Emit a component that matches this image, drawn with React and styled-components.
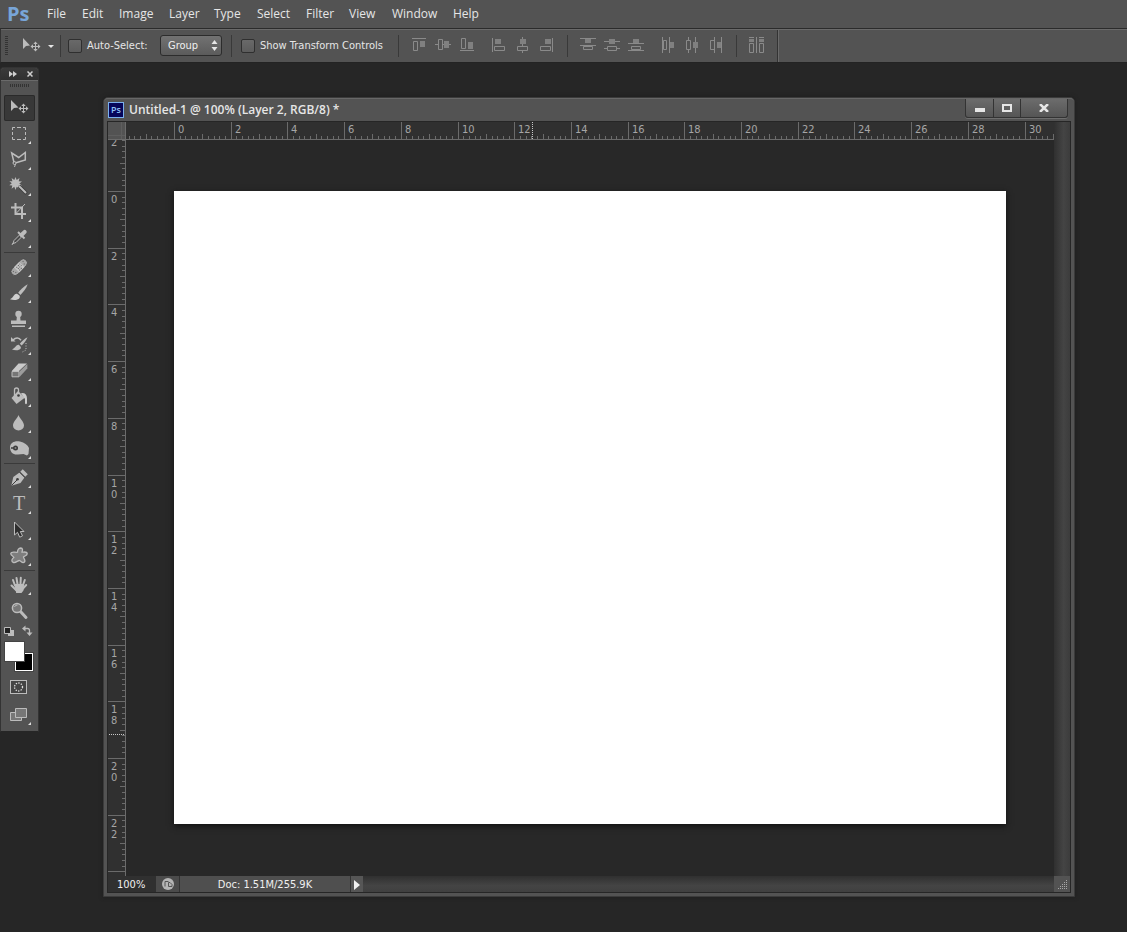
import React from "react";
import styled, { createGlobalStyle } from "styled-components";

const MENUS = ["File", "Edit", "Image", "Layer", "Type", "Select", "Filter", "View", "Window", "Help"];
const UI = `"Open Sans", "Noto Sans", sans-serif`;
const SMALL = `"DejaVu Sans Condensed", "DejaVu Sans", sans-serif`;

const Global = createGlobalStyle`
  * { box-sizing: border-box; }
  body { margin: 0; background: #262626; }
  button { font: inherit; color: inherit; border: 0; padding: 0; background: none; display: block; }
  svg { display: block; }
`;

const Page = styled.div`
  min-height: 100vh;
  display: flex;
  flex-direction: column;
  background: #262626;
  color: #e6e6e6;
  font: 11px/14px ${SMALL};
`;

/* ---------- menu bar ---------- */
const MenuBar = styled.header`
  display: flex;
  align-items: center;
  height: 28px;
  background: #535353;
  font: 12px/16px ${UI};
`;
const Logo = styled.span`
  width: 47px;
  padding-left: 7px;
  color: #78a5d8;
  font: bold 20px/26px ${UI};
`;
const MenuList = styled.nav`
  display: grid;
  grid-template-columns: 35px 37px 50px 45px 43px 49px 43px 43px 61px 40px;
`;
const MenuItem = styled.button`
  text-align: left;
  white-space: nowrap;
`;

/* ---------- options bar ---------- */
const OptionsBar = styled.div`
  display: flex;
  align-items: center;
  height: 35px;
  background: #535353;
  border-top: 1px solid #2b2b2b;
  border-bottom: 1px solid #232323;
  border-left: 1px solid #333;
  box-shadow: inset 0 1px 0 #6a6a6a;
`;
const Section = styled.div`
  display: flex;
  align-items: center;
  width: ${(p) => p.$w}px;
  padding: 0 ${(p) => p.$right ?? 9}px 0 ${(p) => p.$left}px;
  gap: 5px;
  white-space: nowrap;
  & > * { flex: none; }
`;
const Icons = styled.div`
  display: flex;
  align-items: center;
  gap: 8px;
  padding: 0 8px;
`;
const IconGroup = styled.div`
  display: flex;
`;
const AlignButton = styled.button`
  width: 24px;
  height: 24px;
  padding: 3px 4px 5px;
`;
const Separator = styled.span`
  width: 1px;
  height: 22px;
  background: #393939;
`;
const BarEnd = styled.span`
  width: 2px;
  align-self: stretch;
  margin-top: 1px;
  background: #333;
  border-right: 1px solid #6a6a6a;
`;
const Grip = styled.span`
  width: 3px;
  height: 20px;
  background: repeating-linear-gradient(#333 0 1px, #535353 1px 2px);
`;
const Check = styled.input`
  appearance: none;
  flex: none;
  width: 14px;
  height: 14px;
  margin: 0;
  border: 1px solid #2f2f2f;
  border-radius: 2px;
  background: linear-gradient(#696969, #5c5c5c);
`;
const SelectBox = styled.div`
  position: relative;
  width: 62px;
  margin-left: auto;
  svg { position: absolute; right: 4px; top: 5px; pointer-events: none; }
`;
const Select = styled.select`
  appearance: none;
  display: block;
  width: 100%;
  height: 21px;
  padding: 0 7px;
  border: 1px solid #2c2c2c;
  border-radius: 3px;
  background: linear-gradient(#727272, #5b5b5b);
  color: #f0f0f0;
  font: inherit;
`;

/* ---------- workspace ---------- */
const Workspace = styled.main`
  flex: 1;
  display: flex;
  align-items: flex-start;
  padding: 4px 52px 36px 0;
`;

const ToolPanel = styled.aside`
  flex: none;
  display: flex;
  flex-direction: column;
  width: 39px;
  padding-bottom: 3px;
  background: #535353;
  border: 1px solid #333;
  border-bottom-color: #262626;
  border-radius: 4px 4px 0 0;
`;
const PanelHead = styled.div`
  display: flex;
  justify-content: space-between;
  align-items: center;
  height: 12px;
  padding: 0 5px 0 8px;
  background: linear-gradient(#3a3a3a, #303030);
  border-radius: 3px 3px 0 0;
`;
const PanelGrip = styled.div`
  width: 20px;
  height: 3px;
  margin: 3px 6px 8px;
  background: repeating-linear-gradient(90deg, #333 0 1px, #535353 1px 2px);
`;
const ToolBody = styled.div`
  display: flex;
  flex-direction: column;
  padding: 0 3px;
  border-top: 1px solid #6a6a6a;
`;
const Tool = styled.button`
  width: 31px;
  height: 26px;
  border-radius: 2px;
  ${(p) => p.$active && "background: #383838; box-shadow: inset 0 0 0 1px #2a2a2a;"}
`;
const ToolLine = styled.hr`
  width: 31px;
  height: 1px;
  margin: 1px 0;
  border: 0;
  background: #3a3a3a;
`;
const SwapRow = styled.div`
  display: flex;
  justify-content: space-between;
  width: 29px;
  height: 13px;
`;
const Swatches = styled.div`
  position: relative;
  width: 28px;
  height: 32px;
  margin: 5px 0 0 1px;
`;
const Swatch = styled.button`
  position: absolute;
  width: ${(p) => (p.$front ? 19 : 18)}px;
  height: ${(p) => (p.$front ? 19 : 18)}px;
  outline: 1px solid #444;
  ${(p) => (p.$front
    ? "left: 0; top: 0; background: #fff;"
    : "right: 0; bottom: 3px; background: #000; border: 1px solid #fff;")}
`;
const ModeTools = styled.div`
  display: flex;
  flex-direction: column;
  gap: 2px;
`;

/* ---------- document window ---------- */
const DocWindow = styled.section`
  flex: 1;
  min-width: 0;
  display: flex;
  flex-direction: column;
  margin: 30px 0 0 64px;
  background: #535353;
  border: 1px solid #3b3b3b;
  border-radius: 5px 5px 0 0;
  padding: 0 3px 3px;
  box-shadow: 0 0 4px #1d1d1d;
`;
const TitleBar = styled.div`
  display: flex;
  align-items: center;
  gap: 5px;
  height: 23px;
  margin: 0 -3px;
  padding: 0 6px 0 4px;
  border-top: 1px solid #686868;
  border-radius: 4px 4px 0 0;
`;
const Badge = styled.span`
  width: 16px;
  height: 16px;
  border: 1px solid #7ab0ee;
  background: #06065a;
  color: #8fc1f5;
  text-align: center;
  font: 600 9px/13px ${UI};
`;
const Title = styled.h1`
  flex: 1;
  margin: 0;
  font: 600 12px/20px ${UI};
  white-space: nowrap;
`;
const WindowButtons = styled.div`
  display: flex;
  align-self: flex-start;
  height: 19px;
  border: 1px solid #333;
  border-top: 0;
  border-radius: 0 0 3px 3px;
  background: linear-gradient(#6c6c6c, #555);
  box-shadow: 0 1px 0 #6e6e6e;
`;
const WindowButton = styled.button`
  width: ${(p) => p.$w}px;
  display: grid;
  place-items: center;
  & + & { border-left: 1px solid #333; }
`;
const DocBody = styled.div`
  display: grid;
  grid-template-columns: 18px minmax(0, 1fr) 16px;
  grid-template-rows: 18px auto 16px;
  border: 1px solid #262626;
`;
const Corner = styled.div`
  background: #535353;
  border-right: 1px solid #6b6b6b;
  border-bottom: 1px solid #6b6b6b;
  background-image: linear-gradient(#5e5e5e, #5e5e5e), linear-gradient(#5e5e5e, #5e5e5e);
  background-size: 1px 100%, 100% 1px;
  background-position: 13px 0, 0 13px;
  background-repeat: no-repeat;
`;
const TopRuler = styled.div`
  height: 18px;
  overflow: hidden;
  background: #303030;
  border-bottom: 1px solid #6b6b6b;
`;
const SideRuler = styled.div`
  overflow: hidden;
  contain: size;
  background: #303030;
  border-right: 1px solid #6b6b6b;
`;
const VScroll = styled.div`
  grid-row: span 2;
  background: linear-gradient(90deg, #303030, #444 60%, #3c3c3c);
`;
const Viewport = styled.div`
  padding: 51px 48px 52px;
  background: #282828;
`;
const Canvas = styled.div`
  height: 633px;
  background: #fff;
  box-shadow: 0 2px 6px #111;
`;
const StatusBar = styled.footer`
  grid-column: span 2;
  display: flex;
  height: 16px;
  background: linear-gradient(#303030, #444 60%, #404040);
  line-height: 17px;
`;
const ZoomLevel = styled.input`
  width: 48px;
  height: 16px;
  padding: 1px 0 0 9px;
  border: 0;
  background: #303030;
  color: #f0f0f0;
  font: inherit;
`;
const StatusIcon = styled.button`
  width: 24px;
  padding-left: 6px;
  background: #4b4b4b;
  border-right: 1px solid #333;
`;
const DocInfo = styled.span`
  width: 171px;
  background: #4f4f4f;
  border-right: 1px solid #333;
  text-align: center;
  color: #f0f0f0;
`;
const StatusArrow = styled.button`
  width: 12px;
  background: #565656;
`;
const Resize = styled.div`
  background: #535353;
`;

/* ---------- rulers ---------- */
const UNIT = 28.35;
const MAX_UNITS = 120;
const place = (zero, units) => Math.round(zero + units * UNIT);
const tickPath = (zero, size, vertical) => {
  let d = "";
  for (let i = -9; i <= MAX_UNITS * 5; i++) {
    const at = place(zero, i / 5) + 0.5;
    const len = i % 10 === 0 ? size : i % 5 === 0 ? 5 : 3;
    d += vertical ? `M${size - len} ${at}h${len}` : `M${at} ${size - len}v${len}`;
  }
  return d;
};
const evens = (from, to) => Array.from({ length: (to - from) / 2 + 1 }, (_, i) => from + i * 2);

const HorizontalRuler = () => (
  <svg width="100%" height="17" fill="#a6a6a6" fontSize="11">
    <path d={tickPath(48, 17, false)} stroke="#6b6b6b" fill="none" />
    {evens(0, 30).map((n) => (
      <text key={n} x={place(48, n) + 4} y="11">{n}</text>
    ))}
    <path d="M406.500 0V17" stroke="#c8c8c8" strokeDasharray="1 1" />
  </svg>
);
const VerticalRuler = () => (
  <svg width="17" height="100%" fill="#a6a6a6" fontSize="11">
    <path d={tickPath(51, 17, true)} stroke="#6b6b6b" fill="none" />
    {evens(-2, 22).map((n) =>
      String(Math.abs(n)).split("").map((c, i) => (
        <text key={n + "-" + i} x="3" y={place(51, n) + 12 + i * 11}>{c}</text>
      ))
    )}
    <path d="M1 594.500H17" stroke="#c8c8c8" strokeDasharray="1 1" />
  </svg>
);

/* ---------- icons ---------- */
const INK = "#bcbcbc";
const DARK = "#3c3c3c";

const Cross = ({ x, y }) => (
  <g transform={`translate(${x} ${y})`} stroke={INK} fill={INK}>
    <path d="M0-3.500V3.500M-3.500 0H3.500" />
    <path stroke="none" d="M0-5l2.200 2.500h-4.400zM0 5l2.200-2.500h-4.400zM-5 0l2.500 2.200v-4.400zM5 0l-2.500 2.200v-4.400z" />
  </g>
);

const TOOLS = {
  move: <><path fill={INK} d="M7 5v11l3-3 4.500-.5z" /><Cross x={19.5} y={13.5} /></>,
  marquee: <path d="M8.500 9V6.500H11M13 6.500h4M19 6.500h2.500V9M21.500 11v3M21.500 16v2.500H19M17 18.500h-4M11 18.500H8.500V16M8.500 14v-3" fill="none" stroke={INK} />,
  lasso: <g fill="none" stroke={INK} strokeWidth="1.500"><path d="M10 15.500L7.700 6l7 4.500L21.300 5.500V13L12 15.800" /><circle cx="10.500" cy="16" r="1.500" strokeWidth="1" /><path d="M11.500 17l-1 3" strokeWidth="1" /></g>,
  wand: <><path fill={INK} d="M11.500 4l1.200 3 2.800-2-.8 3.200 3.300.2-2.700 2 2.700 2-3.400.1.900 3.300-2.800-2-1.200 3.200-1.200-3.200-2.700 2 .7-3.200-3-.3 2.500-2-2.500-2 3.100-.1-.8-3.200 2.700 2z" /><path d="M15 13l7.500 7.500" stroke={DARK} strokeWidth="3.500" /><path d="M15 13l7 7" stroke={INK} strokeWidth="2" /></>,
  crop: <><path d="M11.500 4v11H22M7 8.500h11V20" fill="none" stroke={INK} strokeWidth="2" /><path d="M12 14.500L21 5" stroke={INK} strokeWidth="1" /></>,
  eyedropper: <><path d="M9 18.500l1-3 6-6 2 2-6 6z" fill="#4a4a4a" stroke={INK} /><path d="M14 7l6.500 6.500" stroke={INK} strokeWidth="2" /><path d="M17.500 10l3.200-3.200" stroke={INK} strokeWidth="4" strokeLinecap="round" /><path d="M8 20l1-2" stroke={INK} /></>,
  bandage: <g transform="rotate(-46 15.200 13.200)"><rect x="5.200" y="9.200" width="20" height="8" rx="4" fill="#a8a8a8" stroke={DARK} strokeWidth=".7" /><rect x="11.500" y="9.500" width="7.500" height="7.500" fill="#c6c6c6" /><path d="M13 11.500h1.200m1 0h1.200m1 0h.8M13 13.500h1.200m1 0h1.200m1 0h.8M13 15.500h1.200m1 0h1.200M7.500 12h1m0 2.500h1M21.500 12h1m-2 2.500h1" stroke="#606060" /></g>,
  brush: <><path fill={INK} d="M23.700 4.300c-3.700 2-7.600 5.700-9.500 8.500l2.200 2.200c3-3 6-6.500 7.300-10.700z" /><path fill="#cecece" d="M13 13.800c-3-.4-3.200 3.700-7 5.400 3 1.300 8 1.200 9.500-1.200.6-1 .3-2-.3-2.700z" /></>,
  stamp: <><circle cx="14.500" cy="8" r="3.200" fill={INK} /><path fill={INK} d="M13 9h3l.5 5.500H22V18H7v-3.500h5.500zM8 19.500h13V21H8z" /></>,
  history: <><path fill={INK} d="M23.500 5.300c-3 1.500-6 4-7.700 6.500l1.800 1.700c2.500-2.200 4.700-5 5.900-8.200zM14.800 12.800c-2.700-.3-3 3-6.800 4.600 3 1.200 7.500 1 8.700-1 .4-.8.200-1.400-.2-2z" /><path d="M9 8c3-3 6-2.500 8 .2" fill="none" stroke={INK} strokeWidth="1.500" /><path fill={INK} d="M7 9.500V5l4.500 4.500z" /><path d="M22 11v7l-4.500 2.500" fill="none" stroke={INK} strokeDasharray="1 1.500" /></>,
  eraser: <><path fill="#c9c9c9" d="M14.500 5.500H23l-8 7.500H7.800z" /><path fill="#9b9b9b" d="M23.300 6v4.500L15.500 19v-5.500z" /><path fill="#767676" stroke={INK} d="M8 13.500h7v5.300H8z" /></>,
  bucket: <><path fill={INK} d="M14 7l7 6.500-8.500 6.500-5-6z" /><path d="M10.500 13V6c0-2.700 4-2.700 4 0v5" fill="none" stroke={INK} strokeWidth="1.300" /><circle cx="14.500" cy="11.500" r="1.300" fill={DARK} /><path fill="#cacaca" d="M17 9c4-.5 6 1.500 6 5.500v4.500c0 1.500-2 1.500-2 0v-4z" /></>,
  blur: <path fill={INK} d="M14.500 5c1 3.500 5.500 6.500 5.500 10.500a5.500 5 0 0 1-11 0C9 11.500 13.500 8.500 14.500 5z" />,
  sponge: <><path fill={INK} d="M6 11c.5-4.500 5-6.700 10-5.500 4.500 1 7.500 3.500 9 6.500l-.5 6-1.500 1.500-3.500-1.500-5.500.5c-4.500.7-8-2-8-7.500z" /><circle cx="11.500" cy="12" r="2.500" fill={DARK} /><path d="M7 12h5" stroke={DARK} strokeWidth="1.500" /><circle cx="11.500" cy="12" r="1" fill="#858585" /></>,
  pen: <><path fill={INK} d="M7.300 20.700l2-8.700 6.200-4.500 5 5-4 5.500z" /><path d="M7.500 20.500l5.500-5.500" stroke={DARK} /><circle cx="13.500" cy="14.300" r="1.300" fill={DARK} /><path d="M17.500 5.500l5 5" stroke={INK} strokeWidth="3.500" /><path d="M15.500 7.200l5.500 5.500" stroke={DARK} strokeWidth=".8" /></>,
  type: <text x="15" y="19" textAnchor="middle" fill={INK} fontSize="20" fontFamily="Liberation Serif, serif">T</text>,
  select: <path fill="#2e2e2e" stroke={INK} d="M10.500 5v13l3-2.700 2.200 4.900 2.800-1.300-2.200-4.400H20z" />,
  shape: <path fill="#7e7e7e" stroke={INK} strokeWidth="1.300" d="M13.500 9.200c0-2 1-4.200 3.200-4.200 2.300.2 2 2.300 1.300 4 1.500.3 5-.8 5.200 1.500.2 2.200-2.700 2.300-3.700 3.500 0 1.500 2.700 3.700.8 5.200-2 1.300-3.300-1.200-4.800-1.700-1.800 0-3.500 2.500-6 2-2.700-.7-1.700-3.700.3-5-.3-1.500-3.300-1.800-3-4.200.7-2.300 4.700-.6 6.700-1.100z" />,
  hand: <g stroke={INK} strokeLinecap="round" strokeWidth="2"><path d="M11 13.500L9 8M13.500 12L12.500 6M16.500 12l.3-6.200M19 13l1.800-5M12 18L7.500 13.500M18.500 17l3.700-4" fill="none" /><path fill={INK} d="M11.500 13h7.500l-.5 5-1.500 2h-4z" /></g>,
  zoom: <><path d="M16.500 13.500l5.500 6" stroke={INK} strokeWidth="3" strokeLinecap="round" /><circle cx="13" cy="10" r="4.600" fill="#777" stroke={INK} strokeWidth="1.500" /><path d="M10.500 9a3 3 0 0 1 3-2" stroke={INK} fill="none" /></>,
  quickmask: <><rect x="6.500" y="6.500" width="16" height="13" fill="#444" stroke={INK} /><circle cx="14.500" cy="13" r="4" fill="none" stroke="#e0e0e0" strokeWidth="1.300" strokeDasharray="1.300 1.300" /></>,
  screen: <g stroke={INK} fill="#777"><path d="M6.500 10.500h11v8h-11z" /><path d="M11.500 6.500h11v9h-11z" /></g>,
};

const GROUPS = [
  ["move", "marquee", "lasso", "wand", "crop", "eyedropper"],
  ["bandage", "brush", "stamp", "history", "eraser", "bucket", "blur", "sponge"],
  ["pen", "type", "select", "shape"],
  ["hand", "zoom"],
];
const NO_FLYOUT = ["move", "zoom", "quickmask"];

const ToolButton = ({ name }) => (
  <Tool $active={name === "move"} aria-label={name}>
    <svg width="31" height="26">
      {TOOLS[name]}
      {!NO_FLYOUT.includes(name) && <path fill="#dedede" d="M27 20v3h-3z" />}
    </svg>
  </Tool>
);

const A = "#8a8a8a";
const F = "#808080";
const ALIGN = {
  top: <><path d="M1 1.500h14" /><path d="M2.500 4.500h4v9h-4z" /><path fill={F} stroke="none" d="M9 4h5v6H9z" /></>,
  middle: <><path d="M0 7.500h3M8 7.500h2M14 7.500h2M3.500 2.500h4v10h-4z" /><path fill={F} stroke="none" d="M9 4h5v7H9z" /></>,
  bottom: <><path d="M1 13.500h14M2.500 1.500h4v10h-4z" /><path fill={F} stroke="none" d="M9 5h5v7H9z" /></>,
  left: <><path d="M1.500 1v14M3.500 9.500h10v4h-10z" /><path fill={F} stroke="none" d="M4 2h6v5H4z" /></>,
  center: <><path d="M7.500 0v3M7.500 7v2M7.500 14v2M2.500 9.500h10v4h-10z" /><path fill={F} stroke="none" d="M5 2h6v5H5z" /></>,
  right: <><path d="M13.500 1v14M1.500 9.500h10v4h-10z" /><path fill={F} stroke="none" d="M6 2h6v5H6z" /></>,
  dTop: <><path d="M0 1.500h16M0 8.500h16M3.500 9.500h9v3h-9z" /><path fill={F} stroke="none" d="M5 2h6v4H5z" /></>,
  dMiddle: <><path d="M0 4.500h16M0 11.500h4M12 11.500h4M3.500 9.500h9v4h-9z" /><path fill={F} stroke="none" d="M5 2h6v5H5z" /></>,
  dBottom: <><path d="M0 6.500h16M0 13.500h16M3.500 9.500h9v3h-9z" /><path fill={F} stroke="none" d="M5 2h6v4H5z" /></>,
  dLeft: <><path d="M2.500 0v16M9.500 0v16M3.500 3.500h3v9h-3z" /><path fill={F} stroke="none" d="M10 5h4v6h-4z" /></>,
  dCenter: <><path d="M4.500 0v3M4.500 13v3M11.500 0v16M2.500 3.500h4v9h-4z" /><path fill={F} stroke="none" d="M9 5h5v6H9z" /></>,
  dRight: <><path d="M6.500 0v16M13.500 0v16M2.500 3.500h4v9h-4z" /><path fill={F} stroke="none" d="M9 5h4v6H9z" /></>,
  auto: <><path d="M7.500 0v16M.5 6.500h4v9h-4zM10.500 6.500h4v9h-4zM0 .500h5M10 .500h5" /><path fill={F} stroke="none" d="M0 2h5v3H0zM10 2h5v3h-5z" /></>,
};
const AlignGroup = ({ names }) => (
  <IconGroup>
    {names.map((n) => (
      <AlignButton key={n} aria-label={n}>
        <svg width="16" height="16" fill="none" stroke={A}>{ALIGN[n]}</svg>
      </AlignButton>
    ))}
  </IconGroup>
);

export default function App() {
  return (
    <Page>
      <Global />
      <MenuBar>
        <Logo>Ps</Logo>
        <MenuList>
          {MENUS.map((m) => <MenuItem key={m}>{m}</MenuItem>)}
        </MenuList>
      </MenuBar>

      <OptionsBar>
        <Section $w={59} $left={4} $right={0}>
          <Grip />
          <button aria-label="Move tool presets">
            <svg width="46" height="24">
              <path fill={INK} d="M10 4v11l3-3 4-.5z" />
              <Cross x={22.5} y={12.5} />
              <path fill="#e6e6e6" d="M35 11h6l-3 3z" />
            </svg>
          </button>
        </Section>
        <Separator />
        <Section $w={170} $left={7}>
          <Check type="checkbox" id="auto" />
          <label htmlFor="auto">Auto-Select:</label>
          <SelectBox>
            <Select aria-label="Auto-select target" defaultValue="Group">
              <option>Group</option>
              <option>Layer</option>
            </Select>
            <svg width="7" height="11" fill="#e6e6e6"><path d="M3.500 0L6.500 4H.5zM3.500 11L.5 7h6z" /></svg>
          </SelectBox>
        </Section>
        <Separator />
        <Section $w={166} $left={9}>
          <Check type="checkbox" id="transform" />
          <label htmlFor="transform">Show Transform Controls</label>
        </Section>
        <Separator />
        <Icons>
          <AlignGroup names={["top", "middle", "bottom"]} />
          <AlignGroup names={["left", "center", "right"]} />
          <Separator />
          <AlignGroup names={["dTop", "dMiddle", "dBottom"]} />
          <AlignGroup names={["dLeft", "dCenter", "dRight"]} />
          <Separator />
          <AlignGroup names={["auto"]} />
        </Icons>
        <BarEnd />
      </OptionsBar>

      <Workspace>
        <ToolPanel>
          <PanelHead>
            <button aria-label="Expand panel">
              <svg width="8" height="6" fill="#cfcfcf"><path d="M0 0l4 3-4 3zM4 0l4 3-4 3z" /></svg>
            </button>
            <button aria-label="Close panel">
              <svg width="6" height="6" stroke="#cfcfcf" strokeWidth="1.500"><path d="M.5 .5l5 5M5.500 .5l-5 5" /></svg>
            </button>
          </PanelHead>
          <ToolBody>
            <PanelGrip />
            {GROUPS.map((g, i) => (
              <React.Fragment key={i}>
                {i > 0 && <ToolLine />}
                {g.map((t) => <ToolButton key={t} name={t} />)}
              </React.Fragment>
            ))}
            <SwapRow>
              <button aria-label="Default colors">
                <svg width="11" height="12"><path fill={INK} d="M4 5h6v6H4z" /><path fill="#222" stroke={INK} d="M.5 2.500h6v6h-6z" /></svg>
              </button>
              <button aria-label="Swap colors">
                <svg width="11" height="12"><path d="M3 3.500h2.500q2 0 2 2V8" fill="none" stroke={INK} strokeWidth="1.300" /><path fill={INK} d="M0 3.500L3.500.500v6zM7.500 11l-3-3.500h6z" /></svg>
              </button>
            </SwapRow>
            <Swatches>
              <Swatch aria-label="Background color" />
              <Swatch $front aria-label="Foreground color" />
            </Swatches>
            <ModeTools>
              <ToolButton name="quickmask" />
              <ToolButton name="screen" />
            </ModeTools>
          </ToolBody>
        </ToolPanel>

        <DocWindow>
          <TitleBar>
            <Badge>Ps</Badge>
            <Title>Untitled-1 @ 100% (Layer 2, RGB/8) *</Title>
            <WindowButtons>
              <WindowButton $w={27} aria-label="Minimize">
                <svg width="10" height="10"><path fill="#e6e6e6" d="M0 5h10v4H0z" /></svg>
              </WindowButton>
              <WindowButton $w={27} aria-label="Maximize">
                <svg width="10" height="8"><path fill="none" stroke="#e6e6e6" strokeWidth="2" d="M1 1h8v6H1z" /></svg>
              </WindowButton>
              <WindowButton $w={47} aria-label="Close">
                <svg width="10" height="8"><path stroke="#e6e6e6" strokeWidth="2.500" d="M1 0l8 8M9 0L1 8" /></svg>
              </WindowButton>
            </WindowButtons>
          </TitleBar>
          <DocBody>
            <Corner />
            <TopRuler><HorizontalRuler /></TopRuler>
            <VScroll />
            <SideRuler><VerticalRuler /></SideRuler>
            <Viewport><Canvas /></Viewport>
            <StatusBar>
              <ZoomLevel aria-label="Zoom level" defaultValue="100%" />
              <StatusIcon aria-label="Document status">
                <svg width="13" height="16">
                  <circle cx="6" cy="8" r="6" fill="#b5b5b5" />
                  <path d="M3 10.500V5.500h3.500M6.500 10.500v-4h1.500l2 2v2z" fill="none" stroke="#555" />
                </svg>
              </StatusIcon>
              <DocInfo>Doc: 1.51M/255.9K</DocInfo>
              <StatusArrow aria-label="Status options">
                <svg width="12" height="16"><path fill="#f0f0f0" d="M3 4l6 5-6 5z" /></svg>
              </StatusArrow>
            </StatusBar>
            <Resize>
              <svg width="16" height="16" stroke="#a8a8a8" strokeDasharray="1 1">
                <path d="M12 4.500h1M10 6.500h3M8 8.500h5M6 10.500h7M4 12.500h9" />
              </svg>
            </Resize>
          </DocBody>
        </DocWindow>
      </Workspace>
    </Page>
  );
}
